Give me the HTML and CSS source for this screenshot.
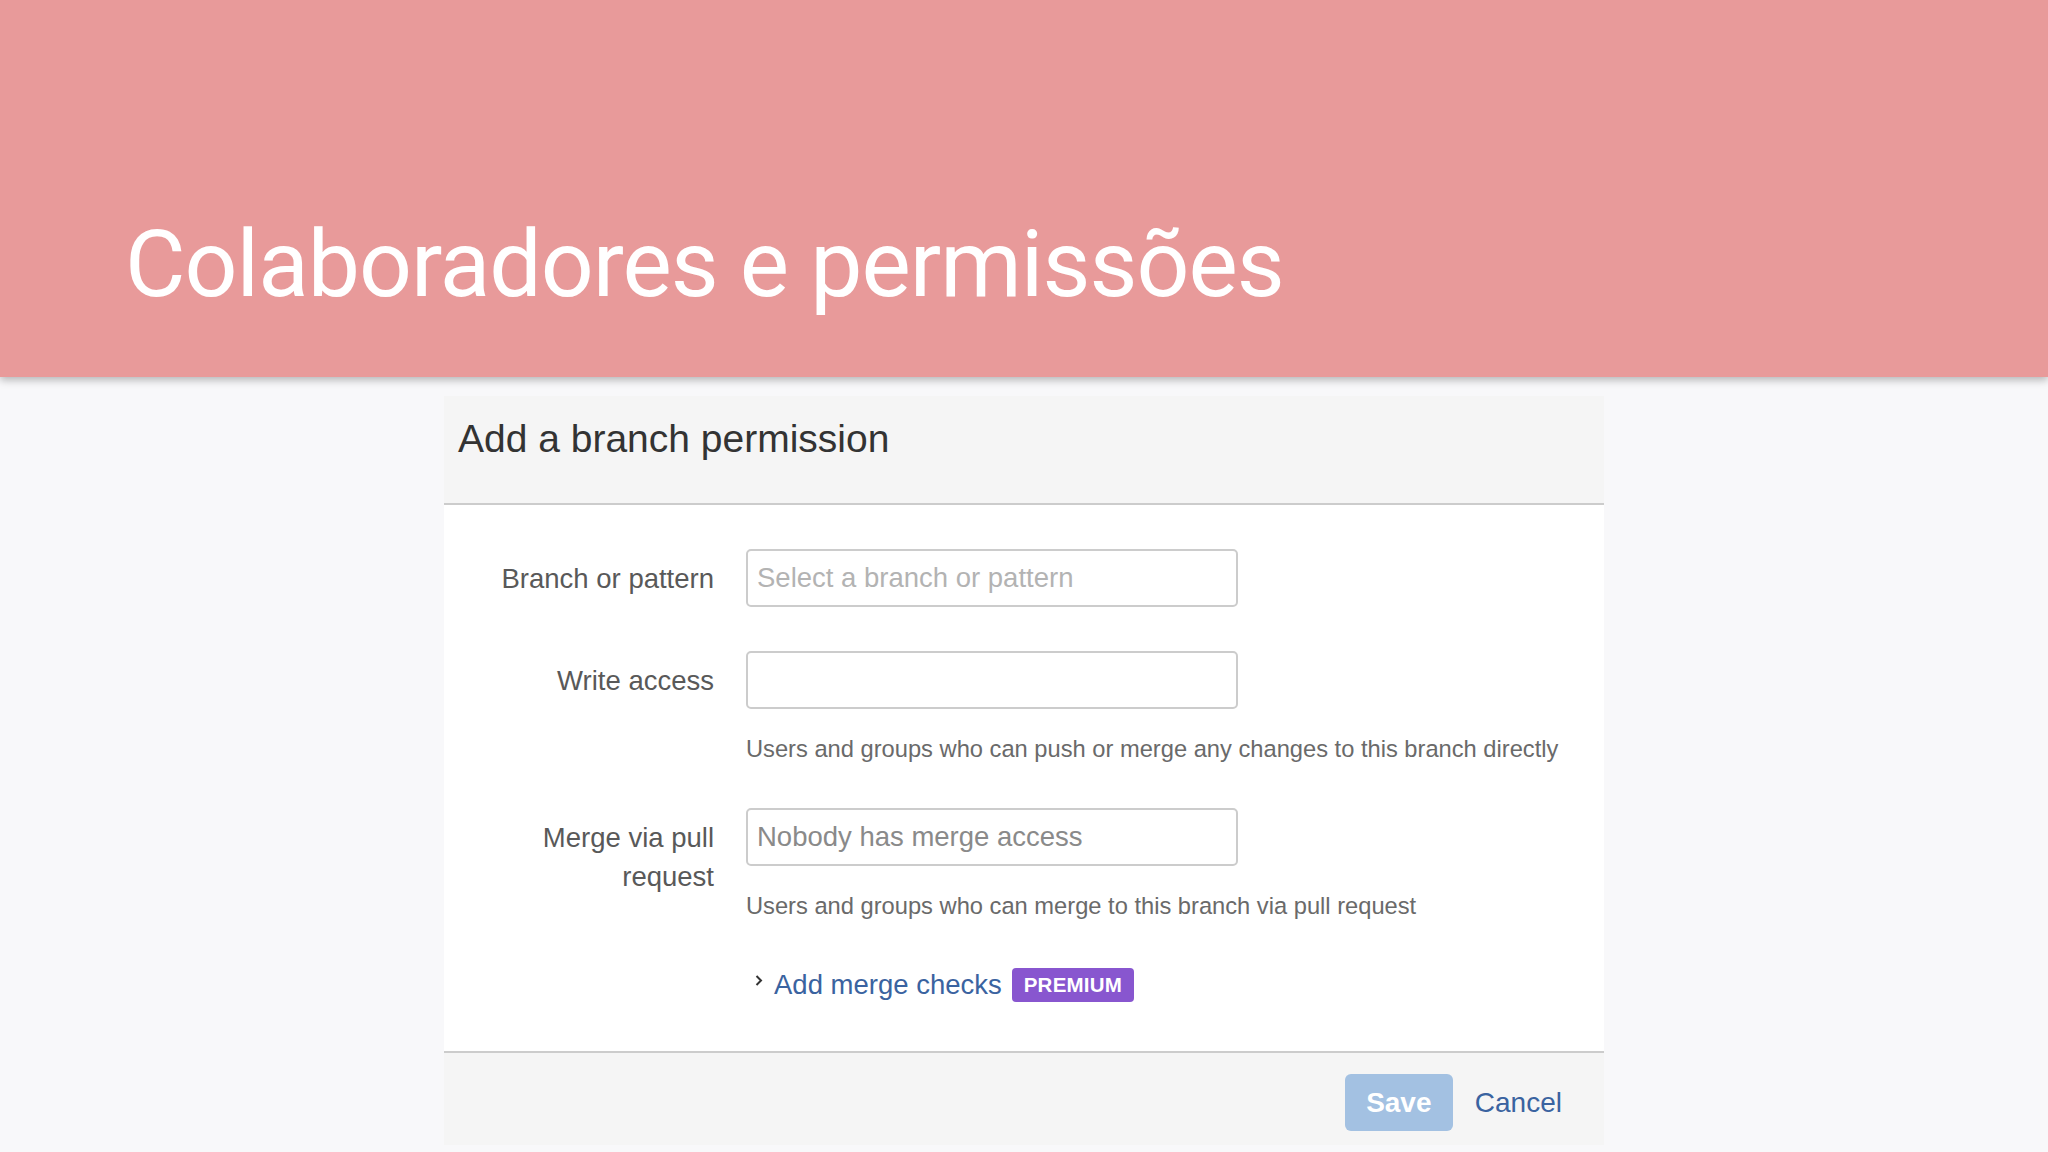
FILE: index.html
```html
<!DOCTYPE html>
<html>
<head>
<meta charset="utf-8">
<link rel="stylesheet" href="styles.css">
</head>
<body>
<header class="banner">
  <h1 class="banner-title">Colaboradores e permissões</h1>
</header>
<main class="stage">
  <section class="dialog">
    <div class="dialog-head">
      <h2 class="dialog-title">Add a branch permission</h2>
    </div>
    <div class="dialog-body">
      <div class="row">
        <label class="label">Branch or pattern</label>
        <div class="field">
          <div class="input placeholder">Select a branch or pattern</div>
        </div>
      </div>
      <div class="row">
        <label class="label">Write access</label>
        <div class="field">
          <div class="input"></div>
          <p class="help">Users and groups who can push or merge any changes to this branch directly</p>
        </div>
      </div>
      <div class="row">
        <label class="label">Merge via pull<br>request</label>
        <div class="field">
          <div class="input placeholder dark">Nobody has merge access</div>
          <p class="help">Users and groups who can merge to this branch via pull request</p>
        </div>
      </div>
      <div class="row checks-row">
        <div class="label"></div>
        <div class="field">
          <div class="checks">
            <svg class="chev" width="10" height="14" viewBox="0 0 10 14"><path d="M2.5 2 L7 6.5 L2.5 11" fill="none" stroke="#333" stroke-width="2"/></svg>
            <span class="link">Add merge checks</span>
            <span class="badge">PREMIUM</span>
          </div>
        </div>
      </div>
    </div>
    <div class="dialog-foot">
      <button class="btn-save">Save</button>
      <span class="cancel">Cancel</span>
    </div>
  </section>
</main>
</body>
</html>
```
FILE: styles.css
```css
html, body {
  margin: 0;
  padding: 0;
}
body {
  width: 2048px;
  height: 1152px;
  overflow: hidden;
  background: #f8f8fa;
  font-family: "Liberation Sans", Arial, sans-serif;
}
.banner {
  height: 377px;
  background: #e89a9a;
  box-shadow: 0 3px 8px rgba(0,0,0,0.28);
  position: relative;
  z-index: 1;
  display: flex;
  align-items: flex-start;
}
.banner-title {
  margin: 0;
  padding: 210px 0 0 125px;
  font-family: Roboto, "Noto Sans", sans-serif;
  font-weight: 400;
  font-size: 93px;
  line-height: 110px;
  color: #ffffff;
  letter-spacing: -1px;
}
.stage {
  padding: 19px 0 0 444px;
}
.dialog {
  width: 1160px;
  background: #ffffff;
}
.dialog-head {
  height: 107px;
  background: #f5f5f5;
  border-bottom: 2px solid #cccccc;
  padding: 0 0 0 14px;
  box-sizing: content-box;
}
.dialog-title {
  margin: 0;
  padding-top: 19px;
  font-weight: 400;
  font-size: 39px;
  line-height: 48px;
  color: #333333;
}
.dialog-body {
  padding: 44px 0 48px 0;
  display: flex;
  flex-direction: column;
  gap: 44px;
}
.row {
  display: flex;
  gap: 32px;
  align-items: flex-start;
}
.label {
  width: 270px;
  text-align: right;
  font-size: 27.5px;
  line-height: 39px;
  color: #595959;
  padding-top: 10px;
  flex: none;
}
.field {
  display: flex;
  flex-direction: column;
}
.input {
  width: 492px;
  height: 58px;
  box-sizing: border-box;
  border: 2px solid #cccccc;
  border-radius: 5px;
  background: #ffffff;
  padding: 0 0 0 9px;
  font-size: 27.5px;
  line-height: 54px;
}
.placeholder {
  color: #b3b3b3;
}
.placeholder.dark {
  color: #8a8a8a;
}
.help {
  margin: 25px 0 0 0;
  font-size: 23.7px;
  line-height: 30px;
  color: #6a6a6a;
  white-space: nowrap;
}
.checks-row {
  margin-top: 2px;
}
.checks-row .label {
  padding-top: 0;
}
.checks {
  display: flex;
  align-items: center;
  height: 36px;
  padding-left: 8px;
}
.chev {
  margin-top: -8px;
  margin-right: 10px;
}
.link {
  font-size: 27.5px;
  line-height: 36px;
  color: #3a63a0;
}
.badge {
  margin-left: 10px;
  background: #8856cf;
  color: #ffffff;
  font-weight: 700;
  font-size: 20.5px;
  line-height: 34px;
  height: 34px;
  padding: 0 12px;
  border-radius: 4px;
  letter-spacing: 0.2px;
}
.dialog-foot {
  height: 71px;
  background: #f5f5f5;
  border-top: 2px solid #cccccc;
  display: flex;
  justify-content: flex-end;
  align-items: flex-start;
  gap: 22px;
  padding: 21px 42px 0 0;
}
.btn-save {
  width: 108px;
  height: 57px;
  border: none;
  border-radius: 6px;
  background: #a3c1e2;
  color: #ffffff;
  font-family: "Liberation Sans", Arial, sans-serif;
  font-weight: 700;
  font-size: 28px;
  padding: 0;
}
.cancel {
  font-size: 28px;
  line-height: 57px;
  color: #3a63a0;
}
```
